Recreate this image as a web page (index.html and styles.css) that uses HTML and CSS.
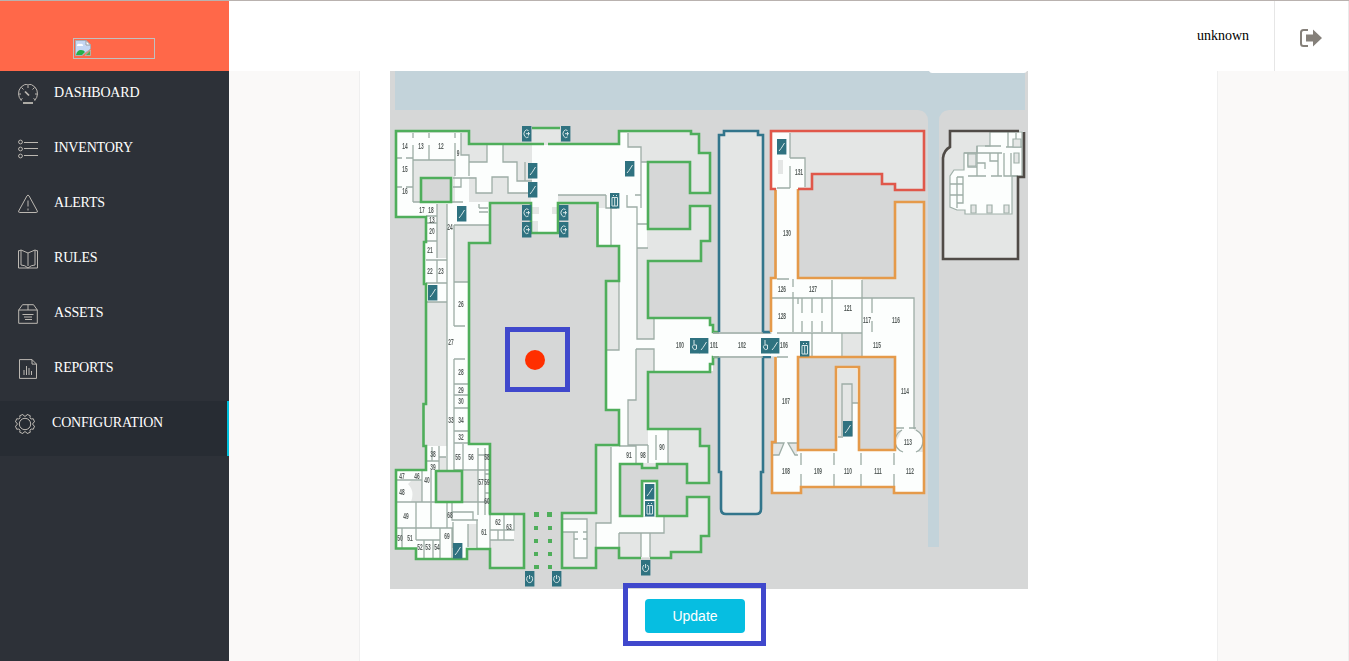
FILE: index.html
```html
<!DOCTYPE html>
<html lang="en">
<head>
<meta charset="utf-8">
<title>Configuration</title>
<link rel="stylesheet" href="styles.css">
</head>
<body>
<div class="app">
  <aside class="sidebar">
    <div class="brand">
      <span class="logo">
        <svg width="16" height="16" viewBox="0 0 16 16"><path d="M0.5 .5H11L15.5 5V9L7 15.5H.5Z" fill="#c5d7f3" stroke="#a7adb5"/><path d="M11 .5V5h4.500Z" fill="#fff" stroke="#9a9fa5"/><path d="M2 6a2 2 0 0 1 3-2 2 2 0 0 1 3 2Z" fill="#fff"/><path d="M1 15q1-5 5-5 3 0 4 2L7 15Z" fill="#25b04a"/><path d="M10 15.500 15.500 10V15.500Z" fill="#5aa84f" stroke="#b6c3c9" stroke-width=".7"/></svg>
      </span>
    </div>
    <nav class="menu">
      <a class="item"><svg class="icon" viewBox="0 0 20 20"><path d="M3.500 16.500A9.500 9.500 0 1 1 16.500 16.500M10 1v3M3.500 3.500l2 2M16.500 3.500l-2 2M.5 10h2.500M19.500 10H17M2.500 16l2-1.500M17.500 16l-2-1.500"/><path d="M5 19h10" stroke-width="1.800"/><path d="M7 7.500l4 4" stroke-width="1.700"/></svg><span>DASHBOARD</span></a>
      <a class="item"><svg class="icon" viewBox="0 0 20 20"><circle cx="2.500" cy="3" r="1.900"/><circle cx="2.500" cy="10" r="1.900"/><circle cx="2.500" cy="17" r="1.900"/><path d="M6 3.500h14M6 9.500h14M6 16.500h14"/></svg><span>INVENTORY</span></a>
      <a class="item"><svg class="icon" viewBox="0 0 20 20"><path d="M9 1.800q1-1.500 2 0L19.300 17q.5 1.500-1 1.500H1.700q-1.500 0-1-1.500ZM10 6.500v6M10 14.500v2"/></svg><span>ALERTS</span></a>
      <a class="item"><svg class="icon" viewBox="0 0 20 20"><path d="M.5 1.500v17.500h19V1.500M3 1v15q4 0 7 3 3-3 7-3V1l-7 3-7-3-2.500 1M17 1l2.500 1M10 4v13"/></svg><span>RULES</span></a>
      <a class="item"><svg class="icon" viewBox="0 0 20 20"><path d="M.7 19.300V6L4.500.7h11L19.300 6v13.300ZM.7 6h18.600M10 .7V6M4.500 10.500h11M6 13h8M7 15.500h7"/></svg><span>ASSETS</span></a>
      <a class="item"><svg class="icon" viewBox="0 0 20 20"><path d="M1.500.6H14l4.500 4.500v14.300h-17ZM14 .6v4.500h4.500M6 16v-5M8.500 16V7M11 16V9M13.500 16v-4"/></svg><span>REPORTS</span></a>
      <a class="item active"><svg class="icon" viewBox="0 0 20 20"><circle cx="10" cy="10" r="5.700"/><path stroke-linejoin="round" d="M19.570 12.120 18.270 15.270 16.140 14.970 14.970 16.140 15.270 18.270 12.120 19.570 10.830 17.860H9.170L7.880 19.570 4.730 18.270 5.030 16.140 3.860 14.970 1.730 15.270 .43 12.120 2.140 10.830V9.170L.43 7.880 1.730 4.730 3.860 5.030 5.030 3.860 4.730 1.730 7.880 .43 9.170 2.140H10.830L12.120 .43 15.270 1.730 14.970 3.860 16.140 5.030 18.270 4.730 19.570 7.880 17.860 9.170V10.830Z"/></svg><span>CONFIGURATION</span></a>
    </nav>
  </aside>
  <div class="main">
    <header class="topbar">
      <span class="user">unknown</span>
      <a class="logout"><svg width="24" height="20" viewBox="0 0 24 20"><path d="M9 2H4.500Q2 2 2 4.500v11Q2 18 4.500 18H9" fill="none" stroke="#85807a" stroke-width="2"/><path d="M7 6.500h7V1.500L23 10l-9 8.500v-5H7Z" fill="#85807a"/></svg></a>
    </header>
    <div class="content">
      <section class="panel">
        <div class="map">
          <svg class="plan" viewBox="390 71 638 518" width="638" height="518">
            <rect x="390" y="71" width="638" height="518" fill="#d6d7d7"/>
            <path fill="#c3d3da" d="M395 71H1025V110H949Q939 111 939 121V547H928V121Q928 111 918 110H395Z"/>
            <path fill="#fff" d="M929 71H1027Q1026 73 1024 73H932Q930 73 929 71Z"/>

            <!-- west wing -->
            <path class="floor" d="M396 131H469V144H619V131H691V134H699V153H710V193H690V162H648V229H690V206H710V241H701V261H648V318H710V325H713V332H719V357H713V364H710V372H648V429H700V446H709V483H687V464H657V468H642V464H620V516H642V481H657V516H687V497H709V536H701V552H671V558H619V548H596V568H562V513H596V445H619V410H606V281H619V246H597.500V203H558V233H531V203H490V243H469V444H490V514H524V568H490V549H467V559H416V548.500H396V470H426V446H423.500V404H426V284H424V242H426V217H396Z"/>
            <path class="floor" d="M532 128H560V144H532Z"/>
            <g class="room">
              <path d="M397 133H461V155H469V162H487V145H503V162H517V181H532V145H618V133H628V147H641V162H647V248H637V339H654V319H710V325H713V332H771V357H713V371H654V349H636V400H628V445H648V430H668V463H619V445V410H607V350H619V246H598V208H606V195H558V232H531V193H508V177H492V193H476V177H469V202H490V225H454V282H469V444H488V514H514V540H490V548H467V558H417V548H397V471H427V446H447V302H426V284H424V242H426V216H397V202H413V160H455V202H447V258H437V204H413V160H397Z"/>
              <path d="M397 133H461V160H413V202H447V258H437V216H397Z"/>
              <path d="M426 204H437V258H447V302H426Z"/>
              <path d="M611 447H619V517H664V533H650V557H641V533H619V548H596V523H611ZM644 483H656V516H644ZM562 519H587V558H574V532H562Z"/>
            </g>
            <path class="floor" d="M413 160H455V202H413ZM437 204H447V258H437ZM461 132H469V155H461ZM462 471H478V502H462ZM439 457H446V470H439ZM411 481H422V502H411Q415 491 408 484ZM468 524H477V547H468ZM490 540H514V515H523V567H491ZM532 207H539V214H532ZM552 207H558V214H552ZM532 221H538V232H532ZM454 225H490V242H469V282H454Z"/>
            <path class="wall" d="M413 133V138M413 145V202M429 133V138M429 145V160M455 133V138M455 143V176M413 160H455M397 158H402M406 158H413M397 187H402M406 187H413M461 133V155H469V176M453 178H461V187H453M469 162H487V145M503 145V162H517V181H532M525 181V162M461 178H476V193H492V177H508V193H532M413 202H463M437 204V258M426 216H437M426 223H437M426 241H437M447 204V470M454 225H490M454 225V326M454 282H469M454 326H465M454 359H465M454 359V444M454 384H469M454 395H469M454 408H469M454 431H469M454 443H469M426 260H437M437 260V283M426 283H447M426 302H447M437 260H447M558 195H606M606 195V208H617M611 208V246M628 133V147H641V162H647M641 162V208M627 195V207H637V224H648M637 224V339H654V319M637 248H648M619 282V350H607M636 349V400H628V445H648M636 349H654V371M635 195H641M713 333H771M713 357H771M648 445V463M636 445V463M656 435V460M668 430V463M619 446H636M611 447V523H596V548M619 533H664V517M641 533V557M650 533V557M619 533V557M562 519H587V558H574V532H562M574 532H578M583 532H587M574 539H578M583 539H587"/>
            <path class="wall" d="M426 461H439M439 446V470M439 457H446M454 444V470H490M463 444V470M478 448V515M485 448V515M478 455H490M485 474H490M485 493H490M462 502H478M397 502H490M397 480H422V502M422 471V502M431 470V528M416 502V540M397 528H440V540H416M402 528V548M424 540V558M433 540V558M440 540V558M447 502V528M452 502V520H478M452 512H473V520M440 528H452V558M453 522V548M468 524V547M477 520V549M490 515V549M490 530H514V514M490 540H514M504 515V540M498 530V540M479 204V208M479 208H488M479 212H488M432 447V461"/>
            <path class="green court" d="M421 178H451V202H421ZM436 471H462V502H436Z"/>
            <path class="green" d="M544 144H469V131H396V217H426V242H424V284H426V404H423.500V446H426V470H396V548.500H416V559H467V549H490V568H524V514H490V444H469V243H490V203H531V233H558V203H597.500V246H619V281H606V410H619V445H596V513H562V568H596V548H619V558H641M650 558H671V552H701V536H709V497H687V516H657V481H642V516H620V464H642V468H657V464H687V483H709V446H700V429H648V372H710V364H713V357H720M720 332H713V325H710V318H648V261H701V241H710V206H690V229H648V162H690V193H710V153H699V134H691V131H619V144H548M532 128H560"/>
            <path fill="#4fae5b" d="M534 512h5v5h-5zm0 14h4v4h-4zm0 13h4v4h-4zm0 13h4v4h-4zm0 13h5v4h-5zM547 512h5v5h-5zm1 14h4v4h-4zm0 13h4v4h-4zm0 13h4v4h-4zm0 13h4v4h-4z"/>

            <!-- central hall -->
            <path class="floor" d="M719 135H724V131H758V135H763V472H761V509Q761 514 756 514H726Q721 514 721 509V472H719Z"/>
            <path class="blue" d="M719 332V135H724V131H758V135H763V332H770M719 357V472H721V509Q721 514 726 514H756Q761 514 761 509V472H763V357H771"/>

            <!-- east wing -->
            <path class="floor" d="M771 131H924V190H895V184H882V174H812V189H798V278H895V202H924V493H894V487H801V493H772V442H775V357H771V278H776V189H771Z"/>
            <path class="room" d="M713 334H775V356H713ZM772 133H790V158H805V187H798V279H862V298H914V430Q922 433 922 441Q922 449 916 452H923V492H895V486H800V492H773V443H777V356H772V279H777V188H772Z"/>
            <path class="court" d="M798 357H895V450H859V367H836V450H798Z"/>
            <path class="floor" d="M843 333H862V356H843ZM778 160H783V174H778ZM773 443H784L779 455H774ZM798 443H788L795 455H798ZM896 430H902L897 440Z"/>
            <path class="floor" d="M838 369H857V437H838Z"/>
            <path class="room" d="M853 403H858V437H838V451H858V486H838V437H853Z"/>
            <path class="room" d="M797 452H896V486H797Z"/>
            <path class="wall" d="M790 133V158M790 166V188M790 158H805V187M777 188H790M777 279H789M793 279V287M793 292V332M772 298H789M784 298H862M832 280V332M862 280V356M802 298V313M802 321V332M812 298V313M812 321V332M822 298V313M822 321V332M832 298V313M777 333H862M812 333V356M842 333V356M798 298V304M862 298H914V429M872 298V313M872 321V332M713 333H763M713 357H763M777 357H788M842 436V384H852V436M852 403H858M838 437H843M801 453V465M801 474V486M834 453V465M834 474V486M861 453V465M861 474V486M894 453V465M894 474V486M896 428H904M909 428H916M902 430Q895 434 895 441Q895 449 903 452M916 430Q923 434 923 441Q923 449 916 452M773 443H784L779 455H773M798 443H788L795 455H798"/>
            <path class="orange" d="M775.500 190V278H771V332M775.500 357V442H772V493H801V487H894V493H924V202H895V278H798V189M798 357H895V450H859V367H836V450H798Z"/>
            <path class="red" d="M776 189H771V131H924V190H895V184H882V174H812V189H798"/>

            <!-- annex -->
            <path class="floor" d="M950 131H1024V177H1018V259H943V158Q944 150 950 147Z"/>
            <path class="room wall-edge" d="M990 132H1022V176H1012V214H965V210H957L950 207V176L954 170H964V153H977V146H990Z"/>
            <path class="wall" d="M964 153H1002M977 146V176M968 153V167H977M968 176H986M991 176H1002M1004 153V176H1018M1011 153V176M977 163H985V169M990 153V161H998M998 153V176M1008 132V147M985 146H1001M1006 147H1022M1016 133V147M957 177H963V203H957V208M957 177V203M950 184H963M950 195H963"/>
            <path class="floor edge" d="M971 205h5v8h-5zm16 0h5v8h-5zm17 0h5v8h-5zM1013 139h8v8h-8zM1014 153h5v10h-5zM968 154h8v12h-8z"/>
            <path class="brown" d="M1019 131H950V147Q944 150 943 158V259H1018V177H1024V132"/>
            <g id="markers"></g>
            <g id="labels" class="label"></g>
          </svg>
          <span class="target"><i class="dot"></i></span>
        </div>
        <div class="actions"><div class="highlight"><button class="update">Update</button></div></div>
      </section>
    </div>
  </div>
</div>
<script src="plan.js"></script>
</body>
</html>
```
FILE: styles.css
```css
* { box-sizing: border-box; }
body { margin: 0; font: 14px "Liberation Serif", serif; overflow: hidden; }
.app { display: flex; height: 661px; border-top: 1px solid #b9b2af; }
.sidebar { width: 229px; background: #2d3138; flex: none; }
.brand { height: 70px; background: #ff6849; padding: 37px 0 0 73px; }
.logo { display: block; width: 82px; height: 21px; border: 1px solid #c0c0c0; padding: 1px; }
.logo svg { display: block; }
.item { display: flex; height: 55px; padding: 13px 0 0 18px; gap: 16px; color: #fff; line-height: 18px; letter-spacing: -.2px; }
.item.active { background: #272c33; border-right: 2px solid #00c0dc; padding-left: 15px; gap: 17px; }
.icon { width: 20px; height: 20px; fill: none; stroke: #bcb8b2; stroke-width: 1; }
.main { flex: 1; display: flex; flex-direction: column; min-width: 0; }
.topbar { height: 70px; flex: none; display: flex; justify-content: flex-end; background: #fff; border-right: 1px solid #e9e9e9; }
.user { padding: 27px 25px 0 0; line-height: 16px; color: #000; }
.logout { width: 74px; border-left: 1px solid #e6e6e6; padding: 27px 0 0 24px; }
.content { flex: 1; background: #faf9f8; padding: 0 130px; display: flex; border-right: 1px solid #eee; }
.panel { flex: 1; background: #fff; border: solid #efefef; border-width: 0 1px; padding-left: 30px; }
.map { position: relative; width: 638px; height: 518px; }
.plan { display: block; filter: blur(.5px); clip-path: inset(0); }
.target { position: absolute; left: 115px; top: 256px; width: 65px; height: 65px; border: 5px solid #4048cc; }
.dot { display: block; width: 20px; height: 20px; margin: 18px 0 0 15px; border-radius: 50%; background: #ff2f00; }
.actions { position: relative; margin: -6px 0 0 233px; }
.highlight { width: 143px; height: 63px; border: 5px solid #4048cc; padding: 11px 0 0 17px; }
.update { display: block; width: 100px; height: 34px; border: 0; border-radius: 4px; background: #06bee1; color: #fff; font: 14px "Liberation Sans", sans-serif; padding: 0; }
.floor { fill: #e4e6e5; }
.court { fill: #d5d6d6; }
.room { fill: #fcfefd; }
.wall, .green, .blue, .red, .orange, .brown { fill: none; }
.wall { stroke: #9dada6; stroke-width: 1.3; }
.wall-edge, .edge { stroke: #a0b0a9; stroke-width: 1.2; }
.green { stroke: #4fae5b; stroke-width: 2.6; }
.green.court { fill: #d5d6d6; }
.blue { stroke: #32758b; stroke-width: 2.6; }
.red { stroke: #e0574a; stroke-width: 2.6; }
.orange { stroke: #e59a4a; stroke-width: 2.6; }
.brown { stroke: #504b47; stroke-width: 2.6; }
.label { font: bold 8.5px "Liberation Sans", sans-serif; fill: #59605e; text-anchor: middle; }
.marker { fill: #2f7280; }
.glyph { fill: none; stroke: #d5e5e6; stroke-width: 1; }
```
FILE: plan.js
```js
const NS = "http://www.w3.org/2000/svg";
// room number, centre x, centre y
const rooms = [
  [14,405,146],[13,421,146],[12,441,146],[9,458,153],[15,405,169],[16,405,191],[17,422,210],[18,431,210],[13,432,220],[20,432,231],[24,450,227],
  [21,430,250],[22,430,271],[23,441,271],[26,461,304],[27,451,342],[28,461,372],[29,461,390],[30,461,401],[33,451,420],[34,461,420],[32,461,437],
  [38,433,454],[39,433,467],[55,458,457],[56,471,457],[58,487,457],[47,402,476],[46,417,476],[40,427,480],[48,402,492],[57,481,482],[59,487,482],[60,487,501],
  [49,406,516],[68,450,515],[50,400,538],[51,410,538],[69,447,536],[52,420,547],[53,428,547],[54,437,547],[61,484,532],[62,498,522],[63,509,527],
  [91,629,455],[98,643,455],[90,662,447],[100,680,345],[101,714,345],[102,742,345],[106,784,345],[131,799,172],[130,787,233],
  [126,782,289],[127,813,289],[121,848,308],[128,782,316],[117,867,320],[116,896,320],[115,877,345],[107,786,401],[114,905,391],[113,908,442],
  [108,786,471],[109,818,471],[110,848,471],[111,878,471],[112,910,471]
];
// marker kind, left, top
const markers = [
  ["entry",522,126],["entry",561,126],["stairs",528,163],["stairs",528,182],["stairs",457,206],["entry",522,205],["entry",559,205],["entry",522,222],["entry",559,222],
  ["stairs",625,161],["lift",610,193],["stairs",428,285],["access",690,338],["stairs",699,338],["access",761,338],["stairs",770,338],["lift",800,341],
  ["stairs",777,139],["stairs",843,421],["stairs",453,543],["door",525,571],["door",552,571],["door",641,560],["stairs",645,484],["lift",645,501]
];
const glyphs = {
  stairs: "M2 12L4 9.500 5 8 7.500 4",
  entry: "M6.500 4.500A3 3.800 0 1 0 6.500 11M4 7.700H8M6.500 6V9.500",
  door: "M4.600 4V8M3 5A3 3.600 0 1 0 6.300 5",
  lift: "M2 4.500H7.500V13H2ZM4.700 4.500V13M3 2.500H4M6 2.500H7",
  access: "M4 2V7H6.500V11M3.500 7A2.500 2.500 0 1 0 6.500 11"
};
function add(parent, tag, attrs) {
  const el = document.createElementNS(NS, tag);
  for (const key in attrs) el.setAttribute(key, attrs[key]);
  parent.appendChild(el);
  return el;
}
const markerLayer = document.getElementById("markers");
for (const [kind, x, y] of markers) {
  const g = add(markerLayer, "g", { transform: `translate(${x} ${y})` });
  add(g, "rect", { class: "marker", width: 9.4, height: 15.5 });
  add(g, "path", { class: "glyph", d: glyphs[kind] });
}
const labelLayer = document.getElementById("labels");
for (const [name, x, y] of rooms) {
  add(labelLayer, "text", { transform: `translate(${x} ${y + 3}) scale(.57 1)` }).textContent = name;
}
```
